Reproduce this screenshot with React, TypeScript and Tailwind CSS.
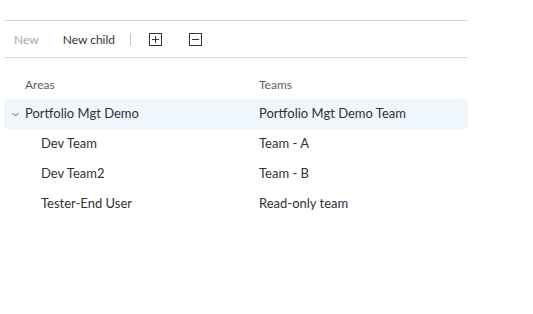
const rows = [
  { area: "Portfolio Mgt Demo", team: "Portfolio Mgt Demo Team", root: true },
  { area: "Dev Team", team: "Team - A" },
  { area: "Dev Team2", team: "Team - B" },
  { area: "Tester-End User", team: "Read-only team" },
];

function BoxIcon({ plus }: { plus?: boolean }) {
  return (
    <svg width="13" height="13" viewBox="0 0 13 13" className="text-[#333]">
      <rect x="0.5" y="0.5" width="12" height="12" fill="none" stroke="currentColor" />
      <line x1="3" y1="6.5" x2="10" y2="6.5" stroke="currentColor" />
      {plus && <line x1="6.5" y1="3" x2="6.5" y2="10" stroke="currentColor" />}
    </svg>
  );
}

export default function App() {
  return (
    <div className="h-[314px] w-[533px] bg-white pt-5 pl-1 font-['Segoe_UI','Lato',sans-serif] text-[13px] text-[#323130]">
      <div className="w-[464px]">
        <div className="flex h-[38px] items-center border-y border-[#d6d6d6] pt-px text-[12px]">
          <span className="ml-[10px] text-[#a6a6a6]">New</span>
          <span className="ml-[24px] text-[#333]">New child</span>
          <span className="ml-[15px] h-[13px] w-px bg-[#c8c8c8]" />
          <span className="ml-[18px] flex">
            <BoxIcon plus />
          </span>
          <span className="ml-[27px] flex">
            <BoxIcon />
          </span>
        </div>
        <div className="mt-[17px] flex h-[19px] items-center text-[12px] text-[#605e5c]">
          <span className="w-[255px] pl-[21px]">Areas</span>
          <span>Teams</span>
        </div>
        <div className="mt-[5px]">
          {rows.map((r) => (
            <div
              key={r.area}
              className={`flex h-[30px] items-center ${r.root ? "bg-[#eff6fc]" : ""}`}
            >
              <div className="flex w-[255px] items-center">
                {r.root ? (
                  <svg width="7" height="5" viewBox="0 0 7 5" className="ml-[8px] mr-[6px]">
                    <path d="M0.5 1 L3.5 4 L6.5 1" fill="none" stroke="#605e5c" />
                  </svg>
                ) : null}
                <span className={r.root ? "" : "pl-[37px]"}>{r.area}</span>
              </div>
              <span>{r.team}</span>
            </div>
          ))}
        </div>
      </div>
    </div>
  );
}
